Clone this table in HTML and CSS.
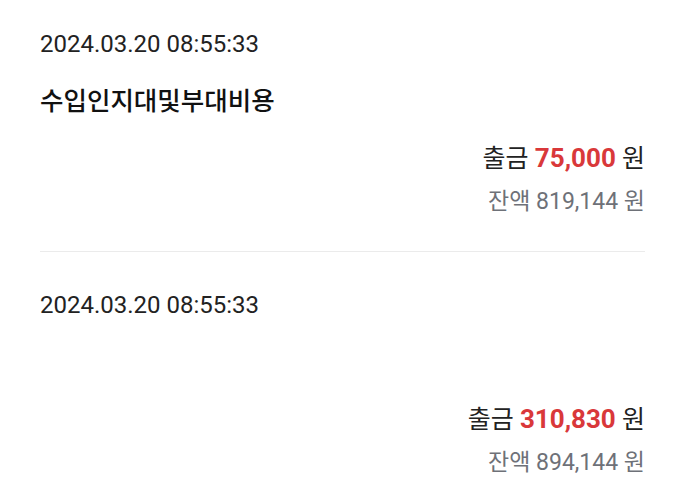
FILE: index.html
```html
<!DOCTYPE html>
<html lang="ko">
<head>
  <meta charset="UTF-8">
  <meta name="viewport" content="width=device-width, initial-scale=1.0">
  <title>거래내역</title>
  <link rel="stylesheet" href="styles.css">
</head>
<body>

<div class="history">
  <div class="entry">
    <div class="entry-date">2024.03.20 08:55:33</div>
    <div class="entry-title">수입인지대및부대비용</div>
    <div class="entry-amount">출금 <span class="amount-out">75,000</span> 원</div>
    <div class="entry-balance">잔액 819,144 원</div>
  </div>
  <div class="divider"></div>

  <div class="entry">
    <div class="entry-date">2024.03.20 08:55:33</div>
    <div class="entry-title"></div>
    <div class="entry-amount">출금 <span class="amount-out">310,830</span> 원</div>
    <div class="entry-balance">잔액 894,144 원</div>
  </div>
  <div class="divider"></div>
</div>

</body>
</html>
```

FILE: styles.css
```css
body {
  font-family: Roboto, 'Noto Sans CJK KR', sans-serif;
  margin: 0;
  padding: 0;
  background-color: #fff;
  color: #222;
}
.entry {
  padding: 28px 40px 0;
}
.entry-date {
  font-size: 24px;
  line-height: 32px;
  color: #222;
}
.entry-title {
  margin-top: 24px;
  height: 34px;
  font-size: 25.5px;
  line-height: 34px;
  font-weight: 500;
  color: #111;
}
.entry-amount {
  margin-top: 23px;
  text-align: right;
  font-size: 25px;
  line-height: 34px;
  color: #222;
}
.amount-out {
  color: #d9383a; /* red for withdrawals */
  font-weight: 700;
  font-size: 26px;
}
.entry-balance {
  margin-top: 11px;
  text-align: right;
  font-size: 23px;
  line-height: 30px;
  color: #6e7178;
}
.divider {
  margin: 34px 40px 9px;
  border-bottom: 1px solid #ebebeb;
}
```
